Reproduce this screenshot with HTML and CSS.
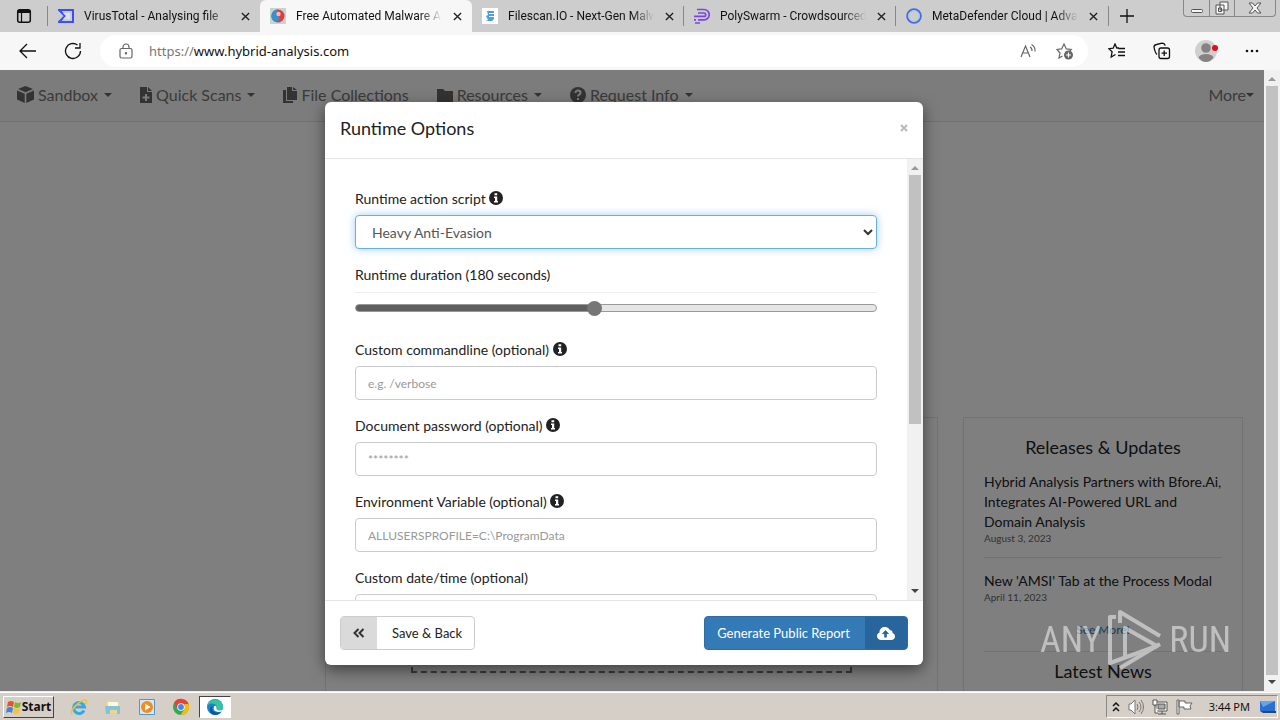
FILE: index.html
```html
<!DOCTYPE html>
<html lang="en">
<head>
<meta charset="utf-8">
<title>Free Automated Malware Analysis Service</title>
<link rel="stylesheet" href="styles.css">
</head>
<body>
<header class="tabstrip">
  <button class="tab-menu" aria-label="Tab actions"><svg width="16" height="16" viewBox="0 0 16 16"><rect x="1.7" y="1.7" width="12.6" height="12.6" rx="2" fill="none" stroke="#111" stroke-width="1.5"/><path d="M2 2h12v3H2z" fill="#111"/><path d="M5.5 4v10" stroke="#111" stroke-width="1.2"/></svg></button>
  <nav class="tabs">
    <div class="tab sep"><svg class="fav" viewBox="0 0 16 16"><path d="M1 2h14v12H1l6-6z" fill="none" stroke="#394eff" stroke-width="2"/><path d="M5 5h7v6H5l3-3z" fill="#dde0ff"/></svg><span class="tab-title">VirusTotal - Analysing file</span><button class="x" aria-label="Close tab"><svg viewBox="0 0 10 10"><path d="M1 1l8 8M9 1L1 9"/></svg></button></div>
    <div class="tab active"><svg class="fav" viewBox="0 0 16 16"><path d="M0 0h16v16H0z" fill="#c3d6d2"/><circle cx="8" cy="8" r="6.5" fill="#e33a3f"/><path d="M8 1.500a6.500 6.500 0 0 0-3 12.300C10 14 11 9 8 8s-1-4 0-6.500" fill="#3a8fce"/><circle cx="8.500" cy="6" r="2.200" fill="#f4b9c0"/></svg><span class="tab-title">Free Automated Malware Analysis</span><button class="x" aria-label="Close tab"><svg viewBox="0 0 10 10"><path d="M1 1l8 8M9 1L1 9"/></svg></button></div>
    <div class="tab"><svg class="fav" viewBox="0 0 16 16"><path d="M0 0h16v16H0z" fill="#fff"/><path d="M5 3h7v2H7v1h5v2H7v1h5v2l-2 2H6L4 12h2L4 8l2-1z" fill="#4fa0d8"/></svg><span class="tab-title">Filescan.IO - Next-Gen Malware</span><button class="x" aria-label="Close tab"><svg viewBox="0 0 10 10"><path d="M1 1l8 8M9 1L1 9"/></svg></button></div>
    <div class="tab sep"><svg class="fav" viewBox="0 0 16 16"><path d="M3 1.500h7a5.200 5.200 0 0 1 0 10.400H4M4 5h6a1.700 1.700 0 0 1 0 3.400H0M1 15h5M0 11.900h2" fill="none" stroke="#7b45dd" stroke-width="1.700"/></svg><span class="tab-title">PolySwarm - Crowdsourced threat</span><button class="x" aria-label="Close tab"><svg viewBox="0 0 10 10"><path d="M1 1l8 8M9 1L1 9"/></svg></button></div>
    <div class="tab sep"><svg class="fav" viewBox="0 0 16 16"><circle cx="8" cy="8" r="6.800" fill="none" stroke="#3f6fe0" stroke-width="2"/><circle cx="8" cy="8" r="5.500" fill="none" stroke="#a8c0f2"/></svg><span class="tab-title">MetaDefender Cloud | Advanced</span><button class="x" aria-label="Close tab"><svg viewBox="0 0 10 10"><path d="M1 1l8 8M9 1L1 9"/></svg></button></div>
    <button class="new-tab" aria-label="New tab"><svg width="14" height="14" viewBox="0 0 14 14"><path d="M7 0v14M0 7h14" stroke="#111" stroke-width="1.300"/></svg></button>
  </nav>
  <div class="win-buttons">
    <button aria-label="Minimize"><svg width="14" height="14" viewBox="0 0 14 14"><rect x="1.500" y="8.500" width="11" height="3" rx="1"/></svg></button>
    <button aria-label="Restore"><svg width="14" height="14" viewBox="0 0 14 14"><path d="M5 1h8v8H5zM1 4h8v9H1zM3.500 7h3v3.500h-3z"/></svg></button>
    <button class="wide" aria-label="Close"><svg width="14" height="14" viewBox="0 0 14 14"><path d="M1 2h3.500L7 5l2.500-3H13L9 7l4 5H9.500L7 9l-2.500 3H1l4-5z"/></svg></button>
  </div>
</header>

<div class="toolbar">
  <button class="tool" aria-label="Back"><svg width="18" height="16" viewBox="0 0 18 16"><path d="M17 8H1.500M8 1L1 8l7 7"/></svg></button>
  <button class="tool" aria-label="Refresh"><svg width="18" height="18" viewBox="0 0 18 18"><path d="M16.500 9A7.500 7.500 0 1 1 13.500 3M16 1v5h-5"/></svg></button>
  <div class="address">
    <svg width="14" height="16" viewBox="0 0 14 16" fill="none" stroke="#666" stroke-width="1.200"><rect x="1" y="5.500" width="12" height="9.500" rx="1.500"/><path d="M4 5.500V4a3 3 0 0 1 6 0v1.500"/><circle cx="7" cy="10.200" r=".6" fill="#666"/></svg>
    <span class="url"><span class="scheme">https://</span>www.hybrid-analysis.com</span>
    <svg width="17" height="16" viewBox="0 0 17 16" fill="none" stroke="#666" stroke-width="1.200"><path d="M1 14L5.500 3 10 14M2.500 10h6M10 4a4 4 0 0 1 2 4M11.500 1.500a7 7 0 0 1 3.500 7"/></svg>
    <svg class="fav-star" width="18" height="17" viewBox="0 0 18 17" fill="none" stroke="#666" stroke-width="1.200"><path d="M6.500 13L3 15l1-5L1 6.500l4.600-.6L8 1l2.300 4.900 4.900.6-1.500 1.500"/><circle cx="12.500" cy="12" r="4.500" fill="#666" stroke="none"/><path d="M12.500 9.500v5M10 12h5" stroke="#fff"/></svg>
  </div>
  <button class="tool" aria-label="Favorites"><svg width="18" height="16" viewBox="0 0 18 16"><path d="M11 5H8.800L7 1 5.200 5.200.8 5.700l3.300 3L3.200 14 7.500 11.500M10.500 5.500H17M10 9h7M10 12.500h7"/></svg></button>
  <button class="tool" aria-label="Collections"><svg width="18" height="18" viewBox="0 0 18 18"><rect x="6" y="6" width="10.500" height="10.500" rx="2"/><path d="M11.200 8.500v5.500M8.500 11.200H14M4 12.500C2.500 11 1.500 8 1 5c0-1.500 1-2.200 2.500-2.500L9 1.200c2 0 2.800 1 3.200 2.500"/></svg></button>
  <button class="tool profile" aria-label="Profile"><svg width="24" height="22" viewBox="0 0 24 22"><circle cx="11" cy="11" r="11" fill="#d2d0ce"/><circle cx="11" cy="8" r="4.800" fill="#858381"/><path d="M3.500 17.500Q5 14 11 14t7.500 3.500Q15 22 11 22t-7.500-4.500" fill="#858381"/><circle cx="20" cy="8" r="3" fill="#e20d18"/></svg></button>
  <button class="tool" aria-label="Settings and more"><svg width="14" height="4" viewBox="0 0 14 4"><g fill="#111" stroke="none"><circle cx="2" cy="2" r="1.300"/><circle cx="7" cy="2" r="1.300"/><circle cx="12" cy="2" r="1.300"/></g></svg></button>
</div>

<div class="viewport">
  <main class="page">
    <nav class="site-nav">
      <a href="#"><svg width="17" height="17" viewBox="0 0 17 17"><path d="M8.500 0L16 3 8.500 6.200 1 3zM0 4.500l7.700 3.200V17L0 13.500zM17 4.500L9.300 7.700V17l7.700-3.500z"/></svg>Sandbox<i class="caret"></i></a>
      <a href="#"><svg width="12" height="16" viewBox="0 0 12 16"><path fill-rule="evenodd" d="M0 0h7v5h5v11H0zM8 0l4 4H8zM5 7v2.500H2.500v2H5V14h2v-2.500h2.500v-2H7V7z"/></svg>Quick Scans<i class="caret"></i></a>
      <a href="#"><svg width="14" height="16" viewBox="0 0 14 16"><path d="M4 0h5v4h5v9H4zM10 0l4 3h-4zM0 3h3v11h7v2H0z"/></svg>File Collections</a>
      <a href="#"><svg width="16" height="14" viewBox="0 0 16 14"><path d="M0 1h6l2 2h8v11H0z"/></svg>Resources<i class="caret"></i></a>
      <a href="#"><svg width="16" height="16" viewBox="0 0 16 16"><circle cx="8" cy="8" r="8"/><path d="M5.500 6c0-3.500 5-3 5-.3C10.500 7.700 8 7.500 8 9.500M8 11v2" fill="none" stroke="#f8f8f8" stroke-width="2"/></svg>Request Info<i class="caret"></i></a>
      <a href="#" class="more">More<i class="caret"></i></a>
    </nav>
    <div class="columns">
      <section class="card main-card"><div class="dropzone"></div></section>
      <aside class="card news">
        <h2>Releases &amp; Updates</h2>
        <article><h3>Hybrid Analysis Partners with Bfore.Ai, Integrates AI-Powered URL and Domain Analysis</h3><time>August 3, 2023</time></article>
        <article class="second"><h3>New 'AMSI' Tab at the Process Modal</h3><time>April 11, 2023</time></article>
        <a class="see-more" href="#">See More!</a>
        <h2 class="latest">Latest News</h2>
      </aside>
    </div>
  </main>
  <div class="backdrop">
    <div class="modal" role="dialog" aria-labelledby="dialog-title">
      <div class="modal-head"><h1 id="dialog-title">Runtime Options</h1><button aria-label="Close"><svg width="8" height="8" viewBox="0 0 8 8"><path d="M1 1l6 6M7 1L1 7" stroke="#bbb" stroke-width="2"/></svg></button></div>
      <div class="modal-body">
        <form>
          <div class="group"><label for="script">Runtime action script <svg class="info" viewBox="0 0 14 14"><circle cx="7" cy="7" r="7"/><path d="M5.500 2.300h2.700v2H5.500zM5 5.500h3.200V10H9v1.500H5V10h1V7H5z" fill="#fff"/></svg></label>
            <select id="script"><option>Heavy Anti-Evasion</option></select></div>
          <div class="group duration"><label for="duration">Runtime duration (180 seconds)</label>
            <input type="range" id="duration" min="0" max="1000" value="457"></div>
          <div class="group"><label for="cmd">Custom commandline (optional) <svg class="info" viewBox="0 0 14 14"><circle cx="7" cy="7" r="7"/><path d="M5.500 2.300h2.700v2H5.500zM5 5.500h3.200V10H9v1.500H5V10h1V7H5z" fill="#fff"/></svg></label>
            <input type="text" id="cmd" placeholder="e.g. /verbose"></div>
          <div class="group"><label for="pass">Document password (optional) <svg class="info" viewBox="0 0 14 14"><circle cx="7" cy="7" r="7"/><path d="M5.500 2.300h2.700v2H5.500zM5 5.500h3.200V10H9v1.500H5V10h1V7H5z" fill="#fff"/></svg></label>
            <input type="text" id="pass" placeholder="********"></div>
          <div class="group"><label for="env">Environment Variable (optional) <svg class="info" viewBox="0 0 14 14"><circle cx="7" cy="7" r="7"/><path d="M5.500 2.300h2.700v2H5.500zM5 5.500h3.200V10H9v1.500H5V10h1V7H5z" fill="#fff"/></svg></label>
            <input type="text" id="env" placeholder="ALLUSERSPROFILE=C:\ProgramData"></div>
          <div class="group"><label for="date">Custom date/time (optional)</label>
            <input type="text" id="date"></div>
        </form>
        <div class="scrollbar inner"><i class="up"></i><i class="thumb"></i><i class="down"></i></div>
      </div>
      <div class="modal-foot">
        <button class="btn"><span class="cap"><svg width="12" height="10" viewBox="0 0 12 10"><path d="M5.500 1l-4 4 4 4M10.500 1l-4 4 4 4" fill="none" stroke="#333" stroke-width="2"/></svg></span><span class="txt">Save &amp; Back</span></button>
        <button class="btn primary"><span class="txt">Generate Public Report</span><span class="cap"><svg width="18" height="13" viewBox="0 0 18 13"><path fill-rule="evenodd" d="M4.500 13C1.500 13 0 11 0 9c0-2 1.300-3 2.500-3.500C2.300 2 5 0 8 0c2.500 0 4.200 1.400 5 3.200 1.800-.2 2.800 1.200 2.500 2.800C17 6.500 18 7.700 18 9.500 18 11.500 16.500 13 14 13zM8.500 3L4.800 7h2.400v3.500h2.600V7h2.400z" fill="#fff"/></svg></span></button>
      </div>
    </div>
  </div>
  <div class="scrollbar outer"><i class="up"></i><i class="thumb"></i><i class="down"></i></div>
  <div class="watermark"><span>ANY</span><svg width="56" height="62" viewBox="0 0 56 62" fill="none" stroke="#fff" stroke-width="4" stroke-linejoin="round"><path d="M9 8H3v46L50 37 18 19v28"/><path d="M13 14V3l40 24M13 59l40-24"/></svg><span>RUN</span></div>
</div>

<footer class="taskbar">
  <button class="start"><svg width="16" height="16" viewBox="0 0 16 16"><path d="M2 3q3-2 6 0L7 8Q4 6 1 8z" fill="#e5532d"/><path d="M9 3q3 2 6 0l-1 5q-3 2-6 0z" fill="#7db928"/><path d="M1 9q3-2 6 0l-1 5q-3-2-6 0z" fill="#3c86d8"/><path d="M8 9q3 2 6 0l-1 5q-3 2-6 0z" fill="#f8c52c"/></svg>Start</button>
  <div class="launch">
    <button aria-label="Internet Explorer"><svg width="18" height="18" viewBox="0 0 18 18" fill="none"><path d="M14 12.500A5.500 5.500 0 1 1 14.500 9H5" stroke="#36a9e5" stroke-width="3"/><path d="M2 16C-1 13 10 2 15 2c3 0 1 4 0 5" stroke="#efc13a" stroke-width="1.500"/></svg></button>
    <button aria-label="Explorer"><svg width="18" height="18" viewBox="0 0 18 18"><path d="M2 3h5l1 2h8v10H2z" fill="#f0d77c"/><path d="M4 4h10v4H4z" fill="#fff9dc"/><path d="M1 8h15v8h-3v-4H6v4H2z" fill="#82c3e0"/></svg></button>
    <button aria-label="Media Player"><svg width="18" height="18" viewBox="0 0 18 18"><path d="M1.500 1.500h15v15h-15z" fill="#d5e8f7" stroke="#4f9ac9"/><circle cx="9" cy="9" r="6" fill="#f58a1f"/><path d="M7 5.500l5.500 3.500L7 12.500z" fill="#fff"/></svg></button>
    <button aria-label="Chrome"><svg width="18" height="18" viewBox="0 0 18 18"><circle cx="9" cy="9" r="8" fill="#34a853"/><path d="M2 5a8 8 0 0 1 14.900 2.500H9L5.500 11z" fill="#ea4335"/><path d="M16.500 6A8 8 0 0 1 8.500 17l4-6V6z" fill="#fbbc05"/><circle cx="9" cy="9" r="3.800" fill="#fff"/><circle cx="9" cy="9" r="2.900" fill="#4285f4"/></svg></button>
    <button class="current" aria-label="Edge"><svg width="18" height="18" viewBox="0 0 18 18"><circle cx="9" cy="9" r="8" fill="#1683cf"/><path d="M1.200 8A8 8 0 0 1 17 8c.3 4-4 5-6 3.500C12 8 9 5 5 5.500 3 5.800 2 7 1.200 8" fill="#35c4a2"/><path d="M7 8c-3 4 1 8 8 6-2 3-6 3.500-8 2.500C3 15 3 9 7 8" fill="#0b54a0"/><path d="M8 8.500c2-2 3 1 2.500 2.500 1.500 2 4 1.500 6 .5l-1 2c-5 1.500-9-1-7.500-5" fill="#fff"/></svg></button>
  </div>
  <div class="tray">
    <svg width="8" height="12" viewBox="0 0 8 12"><path d="M1 5l3-3 3 3M1 10l3-3 3 3" fill="none" stroke="#111" stroke-width="1.500"/></svg>
    <svg width="16" height="16" viewBox="0 0 16 16" fill="#fff" stroke="#777"><path d="M1 5h2l4-4v14l-4-4H1z"/><path d="M9 5q2 3 0 6M11 3q4 5 0 10M13 1q5 7 0 14" fill="none"/></svg>
    <svg width="16" height="16" viewBox="0 0 16 16" fill="#fff" stroke="#555"><path d="M4 3h11v9H4z"/><path d="M6 5h7v5H6z" fill="#aaa"/><path d="M6 15h8M10 12v3M1 1h4v5H1zM3 6v8h3"/></svg>
    <svg width="17" height="16" viewBox="0 0 17 16" fill="#fff" stroke="#666"><path d="M1 1h2v14H1zM3 2h6v2h7l-2 3 1 3H8V8H3z"/></svg>
    <time>3:44 PM</time>
    <svg width="16" height="14" viewBox="0 0 16 14"><path d="M0 1h15v10H0z" fill="#2b6fd0"/><path d="M0 1h15L3 7z" fill="#65a5ee"/><path d="M0 11h16v2H3z" fill="#234681"/></svg>
  </div>
</footer>
</body>
</html>
```
FILE: styles.css
```css
* { box-sizing: border-box; }
body { margin: 0; height: 100vh; display: flex; flex-direction: column; overflow: hidden; font-family: Lato, sans-serif; font-size: 14px; color: #222; }
button { border: 0; padding: 0; background: none; font: inherit; color: inherit; display: flex; align-items: center; justify-content: center; }
svg { flex: none; }
h1, h2, h3 { margin: 0; font-weight: 400; }
a { color: inherit; text-decoration: none; }

.tabstrip { display: flex; height: 32px; flex: none; background: #cdcdcd; font: 12px Roboto, sans-serif; color: #111; }
.tab-menu { width: 48px; }
.tabs { display: flex; flex: 1; min-width: 0; }
.tab { position: relative; flex: 0 1 212px; min-width: 0; display: flex; align-items: center; gap: 10px; padding: 0 10px; border-radius: 6px 6px 0 0; }
.tab.sep::before { content: ""; position: absolute; left: -1px; top: 6px; height: 20px; border-left: 1px solid #888; }
.tab.active { background: #f7f7f7; }
.fav { width: 16px; height: 16px; }
.tab-title { flex: 1; min-width: 0; overflow: hidden; white-space: nowrap; mask-image: linear-gradient(to right, #000 85%, transparent); }
.x { width: 10px; }
.x svg { width: 9px; height: 9px; stroke: #222; stroke-width: 1.5; }
.new-tab { position: relative; width: 37px; }
.new-tab::before { content: ""; position: absolute; left: 0; top: 6px; height: 20px; border-left: 1px solid #888; }
.win-buttons { display: flex; height: 17px; margin-right: 4px; border: 1px solid #888; border-top: 0; border-radius: 0 0 4px 4px; }
.win-buttons button { width: 25px; }
.win-buttons button + button { border-left: 1px solid #888; }
.win-buttons .wide { width: 41px; }
.win-buttons svg { fill: #f5f5f5; stroke: #555; }

.toolbar { display: flex; align-items: center; gap: 21px; height: 38px; flex: none; padding: 0 16px; background: #f7f7f7; }
.tool { width: 24px; height: 24px; }
.tool svg { fill: none; stroke: #111; stroke-width: 1.3; }
.tool.profile svg { stroke: none; }
.address { flex: 1; display: flex; align-items: center; height: 32px; margin: 0 -4px 0 -6px; padding: 0 14px 0 19px; border-radius: 16px; background: #fff; font: 13px "Noto Sans", sans-serif; color: #111; }
.url { flex: 1; margin-left: 16px; }
.scheme { color: #777; }
.fav-star { margin-left: 19px; }

.viewport { position: relative; flex: 1; min-height: 0; display: flex; border-bottom: 1px solid #eee; }
.page { flex: 1; min-width: 0; overflow: hidden; background: #fff; }
.site-nav { display: flex; align-items: center; gap: 28px; height: 52px; padding: 0 10px 2px 17px; background: #f8f8f8; border-bottom: 1px solid #e0e0e0; font-size: 16px; color: #777; }
.site-nav a { display: flex; align-items: center; gap: 4px; }
.site-nav svg { fill: #666; }
.caret { border: 4px solid transparent; border-top-color: #666; border-bottom: 0; }
.site-nav a .caret { margin-left: 2px; }
.site-nav .more { margin-left: auto; gap: 0; }
.site-nav .more .caret { margin-left: 0; }
.columns { display: flex; justify-content: flex-end; gap: 25px; padding: 295px 21px 0 0; }
.card { border: 1px solid #e4e4e4; height: 340px; }
.main-card { flex: 0 1 613px; padding: 0 85px; }
.dropzone { height: 255px; border: 2px dashed #777; border-top: 0; }
.news { flex: 0 0 280px; padding: 17px 20px; }
.news h2 { font-size: 18px; line-height: 24px; text-align: center; }
.news article { padding: 13px 0; border-bottom: 1px solid #e4e4e4; }
.news h3 { font-size: 14px; line-height: 20px; }
.news time { display: block; font-size: 10px; line-height: 12px; color: #666; }
.news .second { border: 0; padding-bottom: 0; }
.see-more { display: block; margin: 18px 0 12px; font-size: 12px; line-height: 18px; text-align: center; color: #337ab7; }
.news .latest { border-top: 1px solid #e4e4e4; padding-top: 7px; }

.backdrop { position: absolute; inset: 0 16px 0 0; padding: 32px 16px 26px 0; display: flex; justify-content: center; background: rgba(0, 0, 0, .5); }
.modal { flex: 0 1 598px; display: flex; flex-direction: column; overflow: hidden; background: #fff; border-radius: 6px; box-shadow: 0 5px 15px rgba(0, 0, 0, .5); }
.modal-head { display: flex; justify-content: space-between; align-items: center; height: 57px; flex: none; padding: 0 15px 4px; border-bottom: 1px solid #e5e5e5; }
.modal-head h1 { font-size: 18px; line-height: 24px; }
.modal-body { flex: 1; min-height: 0; overflow: hidden; display: flex; }
form { flex: 1; min-width: 0; padding: 30px; }
.group { display: flex; flex-direction: column; gap: 6px; margin-bottom: 16px; }
label { line-height: 20px; }
.info { width: 14px; height: 14px; vertical-align: -1px; fill: #222; }
.group input[type="text"], select { width: 100%; height: 34px; padding: 0 12px; border: 1px solid #ccc; border-radius: 4px; background: #fff; font: 14px Lato, sans-serif; color: #555; }
.group input[type="text"] { font-size: 12px; }
.group input::placeholder { color: #999; }
.group select { appearance: none; padding-left: 16px; border-color: #66afe9; box-shadow: 0 0 8px rgba(102, 175, 233, .6); background: url("data:image/svg+xml,%3Csvg xmlns='http://www.w3.org/2000/svg' width='10' height='7'%3E%3Cpath d='M1 1l4 4 4-4' fill='none' stroke='%23333' stroke-width='2'/%3E%3C/svg%3E") no-repeat right 3px center #fff; }
.duration label { border-bottom: 1px solid #eee; padding-bottom: 7px; }
.duration input { appearance: none; width: 100%; height: 16px; margin: 1px 0 8px; background: none; }
.duration input::-webkit-slider-runnable-track { height: 8px; border: 1px solid #999; border-radius: 4px; background: linear-gradient(to right, #5f5f5f 46%, #e6e6e6 46%); }
.duration input::-webkit-slider-thumb { appearance: none; width: 15px; height: 15px; margin-top: -4px; border-radius: 50%; background: #767676; }
.modal-foot { display: flex; justify-content: space-between; align-items: center; height: 65px; flex: none; padding: 0 15px; border-top: 1px solid #e5e5e5; }
.btn { height: 34px; border: 1px solid #ccc; border-radius: 4px; overflow: hidden; font-size: 13px; }
.btn > span { display: flex; align-items: center; height: 100%; }
.btn .cap { padding: 0 12px; background: #dadada; }
.btn .txt { padding: 0 12px 0 15px; }
.btn.primary { border-color: #2e6da4; background: #337ab7; color: #fff; }
.btn.primary .txt { padding: 0 15px 0 12px; }
.btn.primary .cap { background: #28659c; }

.scrollbar { display: flex; flex-direction: column; align-items: center; flex: none; width: 16px; padding: 7px 0; background: #f1f1f1; }
.scrollbar .up, .scrollbar .down { border: 4px solid transparent; }
.scrollbar .up { border-bottom-color: #999; border-top: 0; }
.scrollbar .down { border-top-color: #444; border-bottom: 0; margin-top: auto; }
.scrollbar .thumb { width: 12px; margin: 5px 0; background: #c1c1c1; }
.outer .thumb { flex: 1; }
.inner .thumb { height: 249px; }

.watermark { position: absolute; right: 49px; bottom: 20px; display: flex; align-items: center; gap: 6px; opacity: .5; color: #fff; font: 36px "Liberation Sans Narrow", "Roboto Condensed", sans-serif; }

.taskbar { display: flex; align-items: center; height: 28px; flex: none; padding: 0 2px 0 3px; border-top: 1px solid #fff; background: #d6cfc7; color: #111; }
.start { width: 51px; height: 22px; border: 1px solid #fff; border-right-color: #444; border-bottom-color: #444; font: bold 12px "Noto Sans", sans-serif; }
.launch { display: flex; gap: 2px; margin-left: 9px; flex: 1; }
.launch button { width: 32px; height: 22px; }
.launch .current { background: #fff; border: 1px solid #fff; border-top-color: #444; border-left-color: #444; }
.tray { display: flex; align-items: center; gap: 8px; height: 23px; padding: 0 1px 0 5px; border: 1px solid #fff; border-top-color: #888; border-left-color: #888; font: 11px "Noto Sans", sans-serif; }
.tray time { margin: 0 2px 0 8px; }
```
